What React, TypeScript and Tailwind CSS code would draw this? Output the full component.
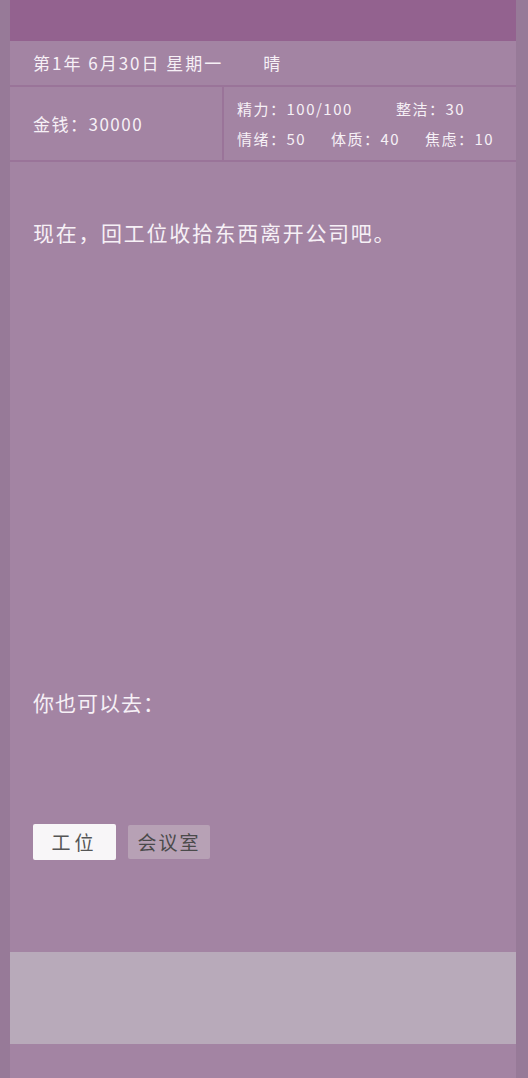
const font = { fontFamily: '"Noto Sans CJK SC", "Noto Sans", sans-serif' }

export default function App() {
  return (
    <div className="min-h-[1078px] bg-[#977a98] px-[10px] pr-[12px]" style={font}>
      <div className="flex min-h-[1078px] flex-col bg-[#a384a3] text-[#f6f0f6]">
        <div className="h-[41px] bg-[#93628f]" />

        <div className="flex h-[46px] items-center border-b-2 border-[#9a7499] pl-[23px] text-[17px] tracking-[2px]">
          <span>第1年 6月30日 星期一</span>
          <span className="ml-[40px]">晴</span>
        </div>

        <div className="flex h-[75px] border-b-2 border-[#9a7499]">
          <div className="flex w-[214px] items-center border-r-2 border-[#9a7499] pl-[23px] text-[17px] tracking-[1.5px]">
            金钱：30000
          </div>
          <div className="flex flex-col justify-center gap-[5px] pl-[13px] text-[15px] leading-[25px] tracking-[1.5px]">
            <div className="flex">
              <span className="w-[159px]">精力：100/100</span>
              <span>整洁：30</span>
            </div>
            <div className="flex">
              <span className="w-[94px]">情绪：50</span>
              <span className="w-[94px]">体质：40</span>
              <span>焦虑：10</span>
            </div>
          </div>
        </div>

        <div className="flex flex-col px-[23px] pt-[54px]">
          <p className="text-[21px] leading-[33px] tracking-[1.7px]">现在，回工位收拾东西离开公司吧。</p>
          <p className="mt-[437px] text-[21px] leading-[33px] tracking-[1px]">你也可以去：</p>
          <div className="mt-[105px] flex items-center gap-[12px]">
            <button className="h-[36px] w-[83px] rounded-[2px] bg-[#f8f6f8] text-[19px] tracking-[4px] text-[#555555]">
              工位
            </button>
            <button className="h-[34px] w-[82px] rounded-[2px] bg-[#b7a1b5] text-[19px] tracking-[2px] text-[#4a4a4a]">
              会议室
            </button>
          </div>
        </div>

        <div className="mt-[92px] h-[92px] bg-[#b8aaba]" />
      </div>
    </div>
  )
}
